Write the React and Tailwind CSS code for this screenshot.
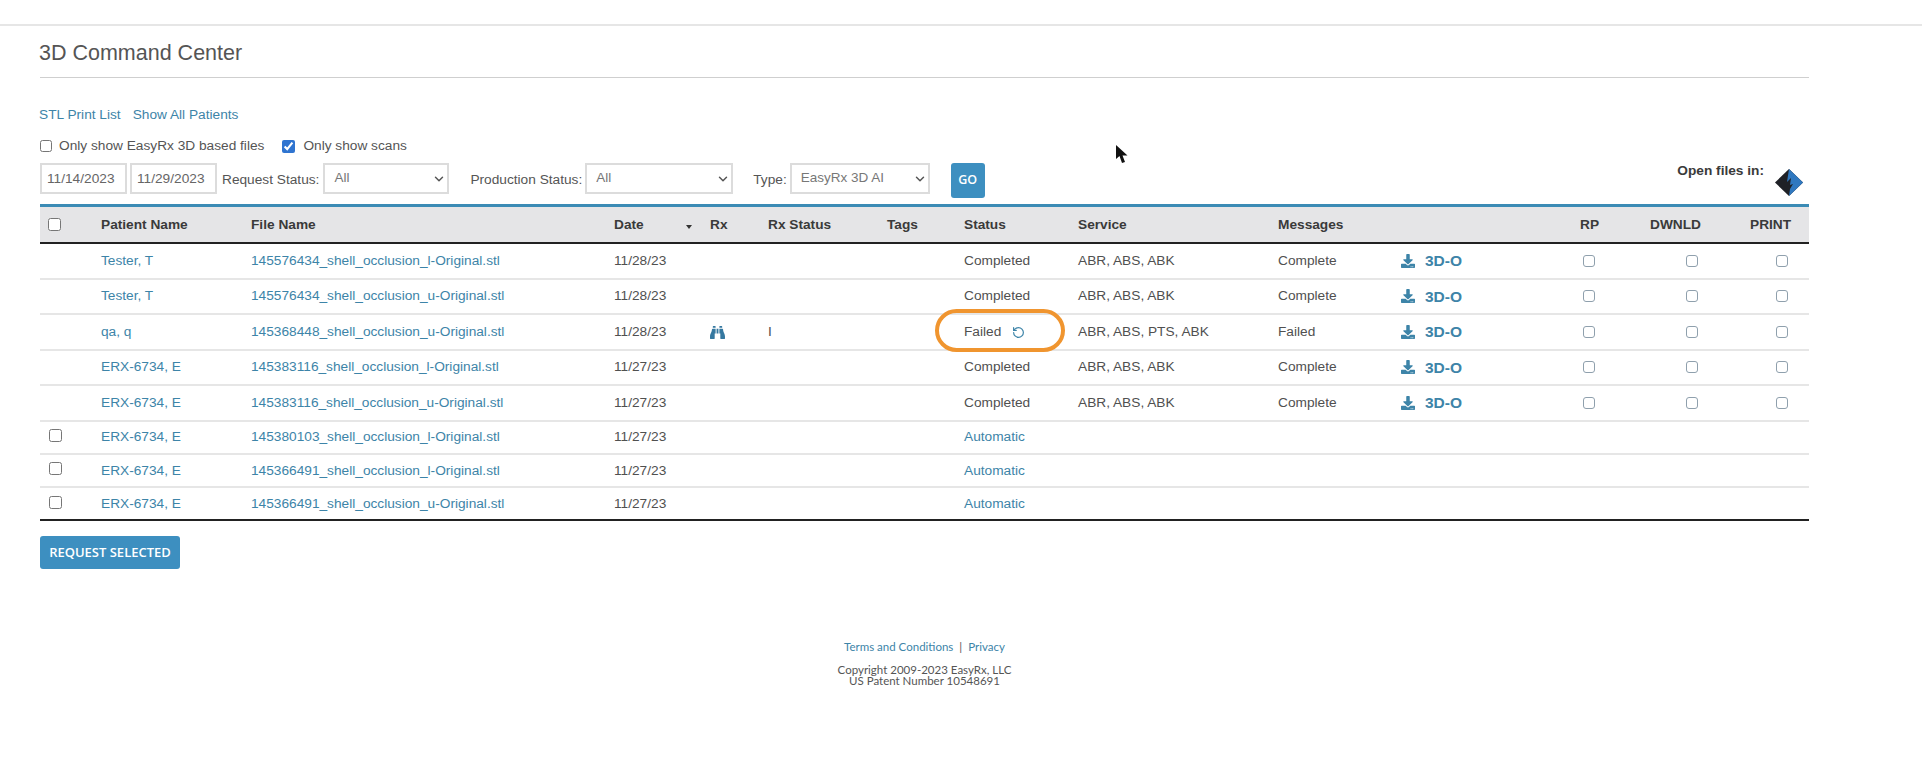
import { ChevronDown, RotateCcw } from "lucide-react";
import { FaBinoculars, FaDownload } from "react-icons/fa";

const ROWS = [
  { patient: "Tester, T", file: "145576434_shell_occlusion_l-Original.stl", date: "11/28/23", status: "Completed", service: "ABR, ABS, ABK", message: "Complete" },
  { patient: "Tester, T", file: "145576434_shell_occlusion_u-Original.stl", date: "11/28/23", status: "Completed", service: "ABR, ABS, ABK", message: "Complete" },
  { patient: "qa, q", file: "145368448_shell_occlusion_u-Original.stl", date: "11/28/23", status: "Failed", service: "ABR, ABS, PTS, ABK", message: "Failed", rx: true },
  { patient: "ERX-6734, E", file: "145383116_shell_occlusion_l-Original.stl", date: "11/27/23", status: "Completed", service: "ABR, ABS, ABK", message: "Complete" },
  { patient: "ERX-6734, E", file: "145383116_shell_occlusion_u-Original.stl", date: "11/27/23", status: "Completed", service: "ABR, ABS, ABK", message: "Complete" },
  { patient: "ERX-6734, E", file: "145380103_shell_occlusion_l-Original.stl", date: "11/27/23", status: "Automatic" },
  { patient: "ERX-6734, E", file: "145366491_shell_occlusion_l-Original.stl", date: "11/27/23", status: "Automatic" },
  { patient: "ERX-6734, E", file: "145366491_shell_occlusion_u-Original.stl", date: "11/27/23", status: "Automatic" },
];

function Dropdown({ value, width }) {
  return (
    <div className={`relative ${width}`}>
      <select className="w-full h-[31px] appearance-none bg-white border-2 border-[#dcdcdc] pl-[9px] text-[13.5px] text-[#777]">
        <option>{value}</option>
      </select>
      <ChevronDown className="absolute right-[3px] top-[9px] w-[14px] h-[14px] text-[#555] pointer-events-none" strokeWidth={2.5} />
    </div>
  );
}

function SmallCheck() {
  return <input type="checkbox" className="block -mt-[1px] appearance-none w-[12px] h-[12px] bg-white border border-[#8fa0ad] rounded-[3px]" />;
}

function FlashLogo() {
  return (
    <svg viewBox="0 0 28 27" className="w-[28px] h-[27px]">
      <polygon points="14,0 28,13.5 14,27 0,13.5" fill="#1f2126" />
      <polygon points="14,0 28,13.5 14,27 15,20 18,15 15,16 16,9 12,13 14,0" fill="#2f78c0" />
    </svg>
  );
}

function Row({ row, index }) {
  const hasCheck = index >= 5;
  const done = !hasCheck;
  return (
    <tr className={`[&>td]:pt-[1px] ${hasCheck ? "h-[33.3px]" : "h-[35.5px]"}`}>
      <td className="pl-[9px] border-b-2 border-[#e6e6e6]">{hasCheck && <input type="checkbox" className="block -mt-[4px] w-[13px] h-[13px]" />}</td>
      <td className="pl-[1px] border-b-2 border-[#e6e6e6] text-[#3d84a8]">{row.patient}</td>
      <td className="pl-[1px] border-b-2 border-[#e6e6e6] text-[#3d84a8]">{row.file}</td>
      <td className="border-b-2 border-[#e6e6e6]">{row.date}</td>
      <td className="border-b-2 border-[#e6e6e6]">{row.rx && <FaBinoculars className="w-[15px] h-[15px] text-[#3578a0]" />}</td>
      <td className="border-b-2 border-[#e6e6e6]">{row.rx && "I"}</td>
      <td className="border-b-2 border-[#e6e6e6]"></td>
      <td className="border-b-2 border-[#e6e6e6]">
        {row.status === "Automatic" && <span className="text-[#3d84a8]">Automatic</span>}
        {row.status === "Completed" && "Completed"}
        {row.status === "Failed" && (
          <span className="relative inline-flex items-center gap-[11px]">
            Failed
            <RotateCcw className="w-[13px] h-[13px] text-[#3d84a8]" strokeWidth={2.2} />
            <span className="absolute left-[-29px] top-[-13px] w-[130px] h-[43px] border-4 border-[#f0952f] rounded-full"></span>
          </span>
        )}
      </td>
      <td className="border-b-2 border-[#e6e6e6]">{row.service}</td>
      <td className="border-b-2 border-[#e6e6e6]">{row.message}</td>
      <td className="border-b-2 border-[#e6e6e6]">
        {done && (
          <span className="-mt-[1px] flex items-center gap-[10px] text-[#3d84a8]">
            <FaDownload className="w-[14px] h-[14px]" />
            <span className="text-[15.5px] font-bold">3D-O</span>
          </span>
        )}
      </td>
      <td className="pl-[3px] border-b-2 border-[#e6e6e6]">{done && <SmallCheck />}</td>
      <td className="pl-[36px] border-b-2 border-[#e6e6e6]">{done && <SmallCheck />}</td>
      <td className="pl-[26px] border-b-2 border-[#e6e6e6]">{done && <SmallCheck />}</td>
    </tr>
  );
}

export default function App() {
  return (
    <div className="relative h-[768px] bg-white overflow-hidden font-['Liberation_Sans',Arial,sans-serif] text-[13.7px] text-[#505050]">
      <div className="h-[26px] border-b-2 border-[#e6e6e6]"></div>

      <div className="ml-[40px] w-[1769px]">
        <h1 className="-ml-[1px] mt-[15px] text-[21.5px] leading-[24px] text-[#555]">3D Command Center</h1>
        <div className="mt-[12px] border-t border-[#cfcfcf]"></div>

        <div className="mt-[29px] flex gap-[12px] -ml-[1px] leading-[16px] text-[#3d84a8]">
          <a>STL Print List</a>
          <a>Show All Patients</a>
        </div>

        <div className="mt-[14px] flex items-center h-[18px] text-[#555]">
          <input type="checkbox" className="w-[12px] h-[12px] m-0" />
          <span className="ml-[7px]">Only show EasyRx 3D based files</span>
          <input type="checkbox" defaultChecked className="ml-[18px] w-[13px] h-[13px] m-0 accent-[#2f74d0]" />
          <span className="ml-[8px]">Only show scans</span>
        </div>

        <div className="mt-[8px] flex h-[35px] items-start">
          <input readOnly value="11/14/2023" className="w-[87px] h-[31px] border-2 border-[#dcdcdc] pl-[5px] text-[13.7px] text-[#666]" />
          <input readOnly value="11/29/2023" className="ml-[3px] w-[87px] h-[31px] border-2 border-[#dcdcdc] pl-[5px] text-[13.7px] text-[#666]" />
          <span className="ml-[5px] mr-[4px] leading-[33px] text-[#555]">Request Status:</span>
          <Dropdown value="All" width="w-[126px]" />
          <span className="ml-[21px] mr-[3px] leading-[33px] text-[#555]">Production Status:</span>
          <Dropdown value="All" width="w-[148px]" />
          <span className="ml-[20px] mr-[3px] leading-[33px] text-[#555]">Type:</span>
          <Dropdown value="EasyRx 3D AI" width="w-[140px]" />
          <button className="ml-[21px] w-[34px] h-[35px] bg-[#3d8fc0] rounded-[3px] text-white text-[12.5px] font-semibold font-['Open_Sans',sans-serif]">GO</button>
          <span className="ml-auto text-[#3a3a3a] font-bold leading-[16px]">Open files in:</span>
          <span className="ml-[11px] mr-[6px] mt-[6px]"><FlashLogo /></span>
        </div>

        <table className="mt-[6px] w-[1769px] table-fixed border-separate border-spacing-0 border-t-[3px] border-[#3b8bb5]">
          <colgroup>
            <col className="w-[60px]" />
            <col className="w-[150px]" />
            <col className="w-[364px]" />
            <col className="w-[96px]" />
            <col className="w-[58px]" />
            <col className="w-[119px]" />
            <col className="w-[77px]" />
            <col className="w-[114px]" />
            <col className="w-[200px]" />
            <col className="w-[123px]" />
            <col className="w-[179px]" />
            <col className="w-[70px]" />
            <col className="w-[100px]" />
            <col className="w-[59px]" />
          </colgroup>
          <thead>
            <tr className="h-[37px] bg-[#e5e5e7] text-left text-[#3a3a3a] [&>th]:pt-[2px]">
              <th className="pl-[8px] border-b-2 border-[#222]"><input type="checkbox" className="block -mt-[3px] w-[13px] h-[13px]" /></th>
              <th className="pl-[1px] font-bold border-b-2 border-[#222]">Patient Name</th>
              <th className="pl-[1px] font-bold border-b-2 border-[#222]">File Name</th>
              <th className="font-bold border-b-2 border-[#222]">
                <span className="flex items-center">Date<span className="ml-[42px] mt-[4px] border-x-[3.5px] border-t-[4px] border-x-transparent border-t-[#333]"></span></span>
              </th>
              <th className="font-bold border-b-2 border-[#222]">Rx</th>
              <th className="font-bold border-b-2 border-[#222]">Rx Status</th>
              <th className="font-bold border-b-2 border-[#222]">Tags</th>
              <th className="font-bold border-b-2 border-[#222]">Status</th>
              <th className="font-bold border-b-2 border-[#222]">Service</th>
              <th className="font-bold border-b-2 border-[#222]">Messages</th>
              <th className="border-b-2 border-[#222]"></th>
              <th className="font-bold border-b-2 border-[#222]">RP</th>
              <th className="font-bold border-b-2 border-[#222]">DWNLD</th>
              <th className="font-bold border-b-2 border-[#222]">PRINT</th>
            </tr>
          </thead>
          <tbody>
            {ROWS.map((row, i) => (
              <Row key={i} row={row} index={i} />
            ))}
          </tbody>
        </table>
        <div className="border-t-2 border-[#222] -mt-[2px] relative"></div>

        <button className="mt-[15px] block w-[140px] h-[33px] bg-[#3d8fc0] rounded-[3px] text-white text-[13px] font-semibold font-['Open_Sans',sans-serif]">REQUEST SELECTED</button>

        <div className="mt-[71px] text-center font-['Lato',sans-serif] text-[11.5px] text-[#555] w-[1769px]">
          <p className="leading-[13px]"><a className="text-[#3d84a8]">Terms and Conditions</a><span className="mx-[6px]">|</span><a className="text-[#3d84a8]">Privacy</a></p>
          <p className="mt-[11px] leading-[11px]">Copyright 2009-2023 EasyRx, LLC</p>
          <p className="leading-[11px]">US Patent Number 10548691</p>
        </div>
      </div>

      <svg viewBox="0 0 13 19" className="absolute left-[1115px] top-[145px] w-[13px] h-[19px]">
        <path d="M1 0 L1 14 L4.5 11 L7 18 L10 17 L7.5 10.5 L12.5 10.5 Z" fill="#111" />
      </svg>
    </div>
  );
}
